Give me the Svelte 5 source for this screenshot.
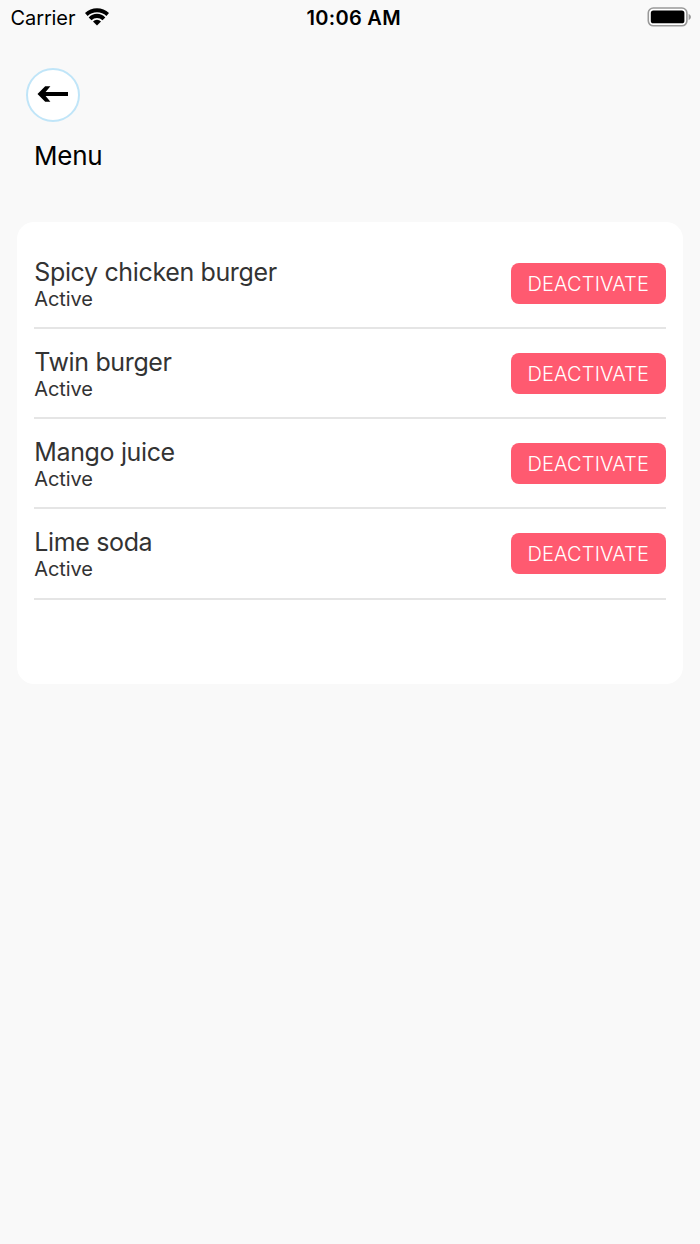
<script>
  const items = ['Spicy chicken burger', 'Twin burger', 'Mango juice', 'Lime soda'];
</script>

<div class="screen">
  <header class="status">
    <div class="carrier">
      <span>Carrier</span>
      <svg width="24" height="18" viewBox="0 0 24 18" aria-hidden="true">
        <path d="M0 5.1A17 17 0 0 1 24 5.1L21.4 8A14 14 0 0 0 2.6 8Z" />
        <path d="M3.7 9.4A11.4 11.4 0 0 1 20.3 9.4L17.5 12.2A8.2 8.2 0 0 0 6.5 12.2Z" />
        <path d="M8 13.5A5.7 5.7 0 0 1 16 13.5L12 17.5Z" />
      </svg>
    </div>
    <time>10:06 AM</time>
    <svg class="battery" width="45" height="20" viewBox="0 0 45 20" aria-hidden="true">
      <rect x="1.3" y="1" width="38.6" height="17.8" rx="5" fill="#fff" stroke="#999" stroke-width="1.6" />
      <rect x="3.8" y="3.5" width="33.6" height="12.8" rx="2.6" />
      <path d="M41.6 6.7Q44 8 44 10Q44 12 41.6 13.3Z" fill="#999" />
    </svg>
  </header>

  <button class="back" aria-label="Back">
    <svg width="32" height="18" viewBox="0 0 32 18" aria-hidden="true">
      <path d="M0.5 9L8.2 1.2H13.4L8.6 7.1H31V11H8.6L13.4 16.8H8.2Z" />
    </svg>
  </button>
  <h1>Menu</h1>

  <main class="card">
    {#each items as item}
      <section class="row">
        <div>
          <h2>{item}</h2>
          <p>Active</p>
        </div>
        <button class="action">DEACTIVATE</button>
      </section>
    {/each}
  </main>
</div>

<style>
  :global(body) {
    background: #f9f9f9;
  }
  .screen {
    box-sizing: border-box;
    width: 700px;
    height: 1244px;
    background: #f9f9f9;
    color: #000;
    font-family: Inter, "Liberation Sans", sans-serif;
    overflow: hidden;
  }
  h1, h2, p {
    margin: 0;
    font-weight: 400;
  }
  svg {
    display: block;
  }
  button {
    font-family: inherit;
    padding: 0;
  }
  .status {
    display: grid;
    grid-template-columns: 1fr auto 1fr;
    align-items: center;
    height: 36px;
    padding: 0 8px 0 10.5px;
    font-size: 20px;
    line-height: 24px;
  }
  .carrier {
    display: flex;
    align-items: center;
    gap: 9.4px;
    letter-spacing: -0.1px;
  }
  .carrier svg {
    margin-bottom: 2px;
  }
  time {
    font-weight: 600;
    padding-left: 5px;
    letter-spacing: 0.3px;
  }
  .battery {
    justify-self: end;
    margin-bottom: 2px;
  }
  .back {
    box-sizing: border-box;
    display: flex;
    align-items: center;
    justify-content: center;
    width: 54px;
    height: 54px;
    margin: 32px 0 0 26px;
    border: 2px solid #c0e5f8;
    border-radius: 50%;
    background: #fff;
    color: #000;
  }
  .back svg {
    margin-bottom: 2px;
  }
  h1 {
    margin: 18px 0 0 34px;
    font-size: 26px;
    line-height: 32px;
    letter-spacing: -0.25px;
  }
  .card {
    box-sizing: border-box;
    width: 665.5px;
    height: 462px;
    margin: 50px 0 0 17.3px;
    padding: 17px 17px 0;
    border-radius: 17px;
    background: #fff;
  }
  .row {
    box-sizing: border-box;
    display: flex;
    align-items: center;
    justify-content: space-between;
    height: 90.15px;
    border-bottom: 2px solid #e5e5e5;
    color: #333;
  }
  h2 {
    padding-top: 2px;
    font-size: 25px;
    line-height: 31px;
    letter-spacing: -0.36px;
  }
  p {
    font-size: 20px;
    line-height: 23px;
    letter-spacing: -0.1px;
  }
  .action {
    width: 155px;
    height: 41px;
    padding-top: 2px;
    border: 0;
    border-radius: 8px;
    background: #ff5a70;
    color: #fff;
    font-size: 20px;
    font-weight: 300;
    letter-spacing: 0.12px;
  }
</style>
